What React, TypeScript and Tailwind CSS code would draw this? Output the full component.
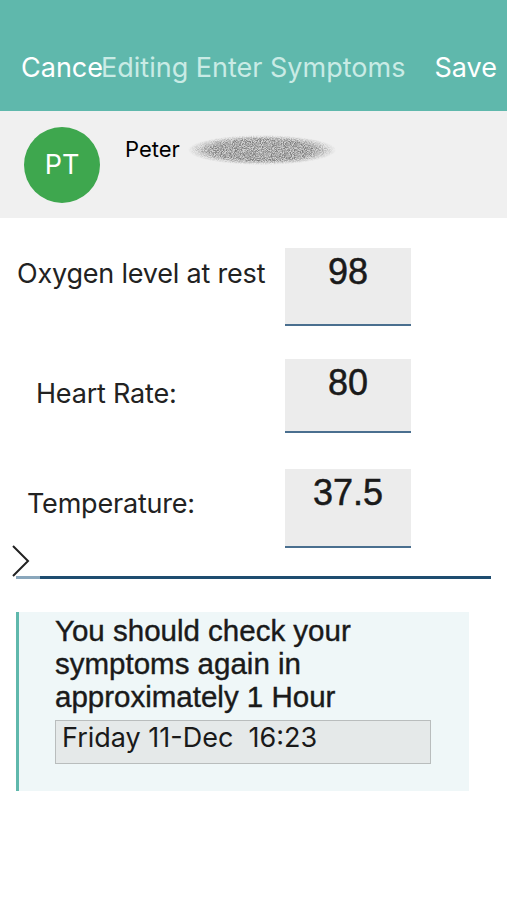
import React from 'react';

const sf = { fontFamily: 'Inter, "Liberation Sans", sans-serif' };
const helv = { fontFamily: '"Liberation Sans", Arial, sans-serif' };

const Field: React.FC<{ label: string; value: string; labelPad: string; boxH: string; mt: string }> = ({
  label,
  value,
  labelPad,
  boxH,
  mt,
}) => (
  <div className={`flex items-start ${mt}`}>
    <div className={`w-[285px] shrink-0 text-[27px] text-[#222] tracking-[-0.2px] ${labelPad}`} style={sf}>
      {label}
    </div>
    <div
      className={`w-[126px] ${boxH} bg-[#ececec] border-b-2 border-[#4a6f8f] text-center text-[36px] leading-[44px] pt-[2px] text-[#1a1a1a] [-webkit-text-stroke:0.5px_#1a1a1a]`}
      style={helv}
    >
      {value}
    </div>
  </div>
);

const Redacted: React.FC = () => (
  <svg width="148" height="30" viewBox="0 0 148 30" className="ml-[8px]">
    <defs>
      <filter id="noise" x="0" y="0" width="100%" height="100%">
        <feTurbulence type="fractalNoise" baseFrequency="1.1" numOctaves="2" seed="7" />
        <feColorMatrix type="matrix" values="0 0 0 0 0.2  0 0 0 0 0.2  0 0 0 0 0.2  0 0 0 2.4 -0.75" />
      </filter>
      <radialGradient id="fade" cx="50%" cy="50%" r="50%">
        <stop offset="0.7" stopColor="white" />
        <stop offset="1" stopColor="black" />
      </radialGradient>
      <mask id="m">
        <rect x="0" y="0" width="148" height="30" rx="12" fill="url(#fade)" />
      </mask>
    </defs>
    <g mask="url(#m)">
      <rect x="0" y="2" width="148" height="26" fill="#d2d2d2" />
      <rect x="0" y="0" width="148" height="30" filter="url(#noise)" />
    </g>
  </svg>
);

const App: React.FC = () => {
  return (
    <div className="w-[507px] h-[900px] bg-white overflow-hidden">
      <div className="h-[111px] bg-[#5fb8ac] flex items-end pb-[23px] pl-[21px] pr-[10px] text-[27px]" style={sf}>
        <span className="text-white">Cance</span>
        <span className="text-[#c9ebe5] -ml-[2px]">Editing Enter Symptoms</span>
        <span className="ml-auto text-white">Save</span>
      </div>

      <div className="h-[107px] bg-[#f0f0f0] flex items-start pl-[24px] pt-[16px]">
        <div className="w-[76px] h-[76px] rounded-full bg-[#3ea74e] flex items-center justify-center text-white text-[27px]" style={sf}>
          PT
        </div>
        <div className="ml-[25px] mt-[6px] flex items-center">
          <span className="text-[22px] text-black" style={sf}>Peter</span>
          <Redacted />
        </div>
      </div>

      <div className="pt-[30px]">
        <Field label="Oxygen level at rest" value="98" labelPad="pl-[17px] pt-[6px]" boxH="h-[78px]" mt="mt-0" />
        <Field label="Heart Rate:" value="80" labelPad="pl-[36px] pt-[15px]" boxH="h-[74px]" mt="mt-[33px]" />
        <Field label="Temperature:" value="37.5" labelPad="pl-[27px] pt-[15px]" boxH="h-[79px]" mt="mt-[36px]" />

        <div className="relative h-[32px] mx-[16px] -mt-[4px]">
          <svg className="absolute -left-[5px] top-0" width="20" height="34" viewBox="0 0 20 34">
            <path d="M2 2 L17 17 L2 32" fill="none" stroke="#222" strokeWidth="2" />
          </svg>
        </div>
        <div className="mx-[16px] flex h-[3px]">
          <div className="w-[24px] bg-[#8aa7bc]" />
          <div className="flex-1 bg-[#1e4d70]" />
        </div>
      </div>

      <div
        className="mt-[33px] ml-[16px] w-[453px] h-[179px] bg-[#eff7f8] border-l-[3px] border-[#5fb8ac] pl-[36px] pt-[2px]"
        style={helv}
      >
        <p className="text-[29.5px] leading-[33px] text-[#1a1a1a] [-webkit-text-stroke:0.4px_#1a1a1a]">
          You should check your
          <br />
          symptoms again in
          <br />
          approximately 1 Hour
        </p>
        <div
          className="mt-[7px] w-[376px] h-[44px] bg-[#e5e9e9] border border-[#b9bdbd] px-[6px] text-[27px] text-[#1a1a1a] leading-[34px]"
          style={sf}
        >
          Friday 11-Dec&nbsp;&nbsp;16:23
        </div>
      </div>
    </div>
  );
};

export default App;
